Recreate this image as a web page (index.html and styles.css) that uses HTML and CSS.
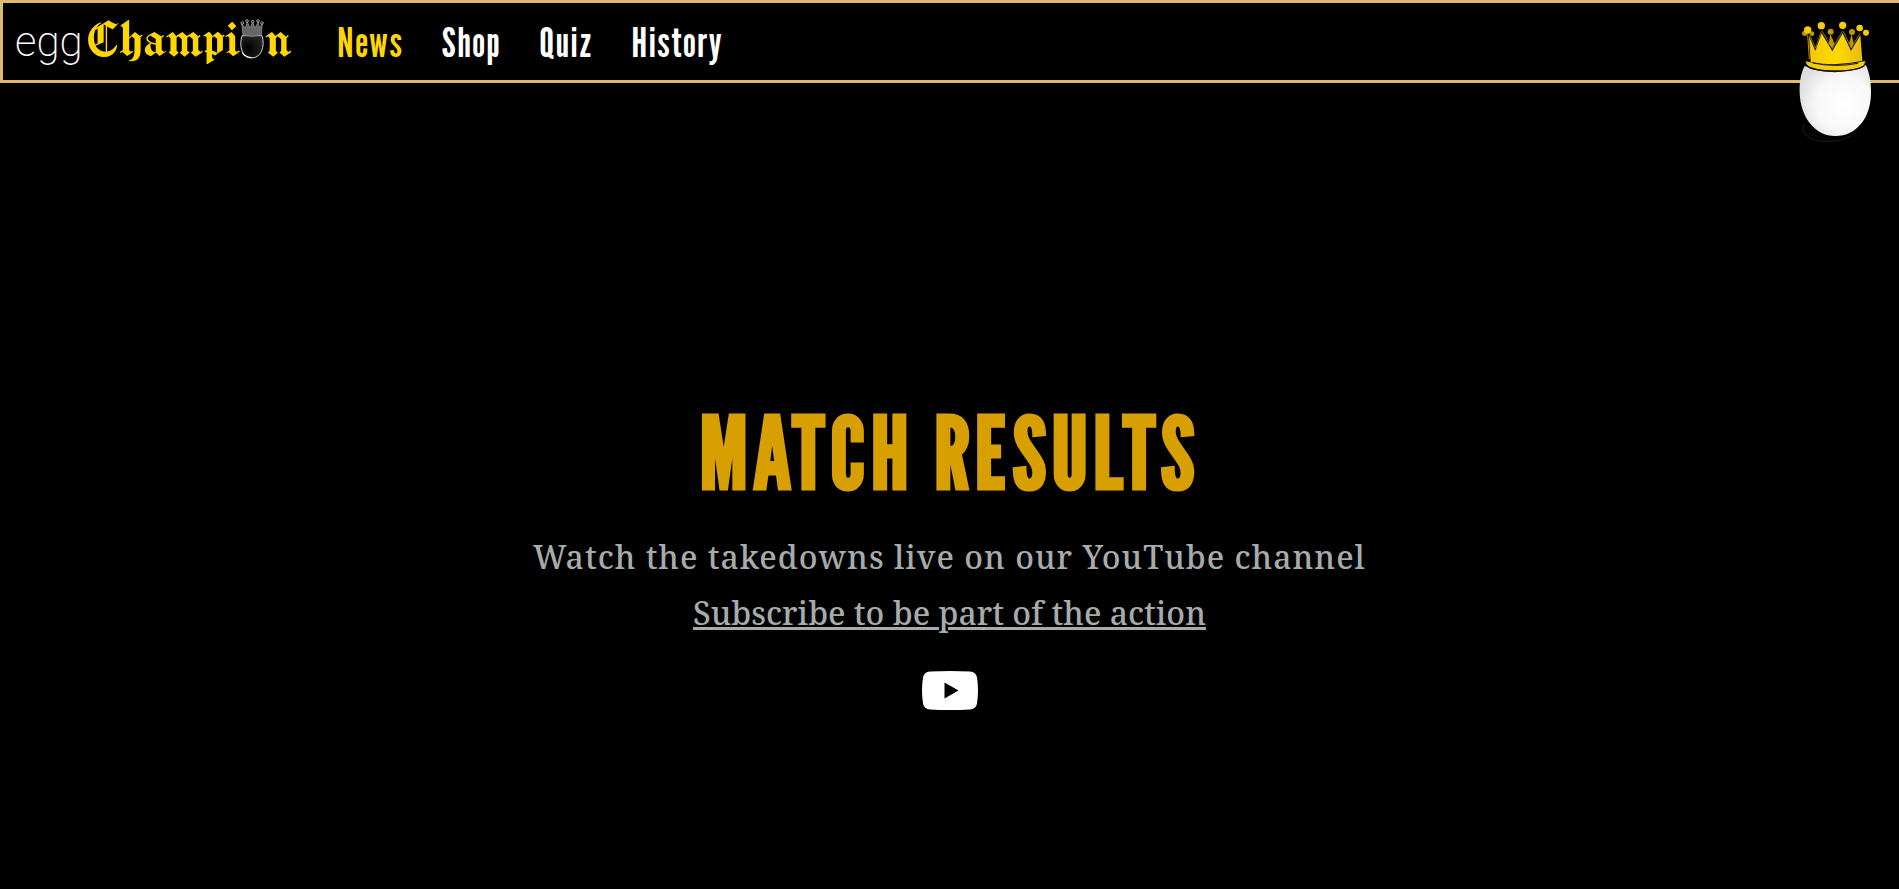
FILE: index.html
```html
<!DOCTYPE html>
<html lang="en">
<head>
<meta charset="utf-8">
<meta name="viewport" content="width=device-width, initial-scale=1">
<title>eggChampion</title>
<link rel="stylesheet" href="styles.css">
</head>
<body>
<header class="site-header">
  <a class="logo" href="#" aria-label="eggChampion">
    <span class="logo-egg">egg</span>
    <span class="logo-name">Champi<svg class="logo-o" viewBox="732 58 72 120" aria-hidden="true">
      <defs>
        <radialGradient id="dark" cx=".35" cy=".6" r=".7"><stop offset="0" stop-color="#000"/><stop offset="1" stop-color="#252525"/></radialGradient>
      </defs>
      <path d="M738 108C728 143 739 174 767 175c29 0 41-35 31-67z" fill="url(#dark)" stroke="#ccc" stroke-width="3"/>
      <path d="M737 155c9 14 19 15 33 19-16 3-31-4-33-19z" fill="#fff"/>
      <path d="M741 106l-4-34 11 13 6-19 8 19 8-18 7 18 10-19 3 19 9-13-3 34q-27 8-55 0z" fill="#666" stroke="#999" stroke-width="2"/>
      <g fill="#222" stroke="#ccc" stroke-width="2"><circle cx="739" cy="70" r="4"/><circle cx="753" cy="64" r="4"/><circle cx="770" cy="66" r="4"/><circle cx="786" cy="64" r="4"/><circle cx="798" cy="70" r="4"/></g>
    </svg>n</span>
  </a>
  <nav class="nav">
    <a class="nav-link active" href="#">News</a>
    <a class="nav-link" href="#">Shop</a>
    <a class="nav-link" href="#">Quiz</a>
    <a class="nav-link" href="#">History</a>
  </nav>
  <svg class="mascot" viewBox="78 54 240 384" aria-hidden="true">
    <defs>
      <radialGradient id="shell" cx=".62" cy=".55" r=".65"><stop offset="0" stop-color="#fff"/><stop offset=".6" stop-color="#f8f8f8"/><stop offset="1" stop-color="#dedede"/></radialGradient>
      <linearGradient id="gold"><stop offset="0" stop-color="#f2c50c"/><stop offset=".5" stop-color="#ffdb00"/><stop offset="1" stop-color="#e8bd12"/></linearGradient>
    </defs>
    <path d="M104 370C88 392 110 421 162 424c35 1 65-5 80-17" fill="#030303" stroke="#111" stroke-width="5"/>
    <path d="M104 198C92 220 88 249 89 278c2 73 46 130 107 130 65 0 107-57 107-130 0-31-4-58-15-82z" fill="url(#shell)"/>
    <path d="M103 184q4-8 13-10l-3-72 6-3 18 48 15-61h6l28 62 28-63h7l23 62 21-50h7l5 83q11 0 12 7-3 14-22 20-74 20-144 0-18-7-20-23z" fill="#090a08"/>
    <g fill="#bd9500"><path d="M176 131l5-28 13 28-7 13zM237 130l8-28 6 28-6 15z"/><circle cx="182" cy="95" r="9"/><circle cx="246" cy="96" r="9"/><circle cx="104" cy="100" r="8"/><circle cx="126" cy="101" r="7"/></g>
    <path d="M117 108l19 44 19-52 32 54 31-54 25 52 28-46 6 76q-79 19-155 4z" fill="url(#gold)"/>
    <path d="M154 94l-17 50-18-38M157 94l30 52 30-52M220 94l23 50 27-44" fill="none" stroke="#c79d00" stroke-width="2"/>
    <path d="M113 104l5 73" fill="none" stroke="#bd9500" stroke-width="3"/>
    <path d="M107 184q80 22 178-1 1 14-18 22-75 18-143-2-14-4-17-19z" fill="#f6cc06"/>
    <path d="M128 189q68 14 136 1" fill="none" stroke="#151400" stroke-width="3"/>
    <path d="M105 196q32 17 83 17 65 1 95-15" fill="none" stroke="#11100b" stroke-width="4"/>
    <g fill="#f5cd09"><circle cx="113" cy="90" r="11"/><circle cx="154" cy="77" r="11"/><circle cx="218" cy="76" r="11"/><circle cx="269" cy="84" r="10"/><circle cx="288" cy="98" r="9"/></g>
  </svg>
</header>
<main class="hero">
  <h1 class="title">MATCH RESULTS</h1>
  <p class="lead">Watch the takedowns live on our YouTube channel</p>
  <a class="subscribe" href="#">Subscribe to be part of the action</a>
  <a class="youtube" href="#" aria-label="YouTube">
    <svg class="youtube-icon" viewBox="0 0 56 39" aria-hidden="true"><path fill="#fff" fill-rule="evenodd" d="M8 .5Q28-.5 48 .5q6 .5 7 6 2 13 0 26-1 5.500-7 6Q28 39.500 8 38.500q-6-.5-7-6-2-13 0-26 1-5.500 7-6zM22.500 11.500v16l14-8z"/></svg>
  </a>
</main>
</body>
</html>
```
FILE: styles.css
```css
* { box-sizing: border-box; }
body {
  margin: 0;
  min-height: 100vh;
  background: #000;
  color: #fff;
  font-family: "League Gothic", Roboto, sans-serif;
}
a { color: inherit; text-decoration: none; }
.site-header {
  position: relative;
  display: flex;
  align-items: center;
  gap: 46px;
  height: 83px;
  padding: 0 12px;
  border: 3px solid #dfb974;
  border-right: 0;
}
.logo {
  display: flex;
  align-items: baseline;
  gap: 1px;
  padding-bottom: 2px;
  line-height: 60px;
}
.logo-egg { font-family: Roboto, sans-serif; font-weight: 200; font-size: 42px; }
.logo-name {
  color: #ffd700;
  font-family: "Manufacturing Consent", "Liberation Serif", serif;
  font-weight: 400;
  font-size: 56px;
}
.logo-o { width: 24px; height: 40px; margin: 0 1px; vertical-align: -3px; }
.nav { display: flex; gap: 38px; }
.nav-link { font-size: 41px; font-weight: 400; line-height: 48px; letter-spacing: 2px; }
.nav-link.active { color: #ffd700; }
.mascot {
  position: absolute;
  top: 15px;
  right: 23px;
  width: 80px;
  height: 128px;
}
.hero {
  display: flex;
  flex-direction: column;
  align-items: center;
  padding: 320px 24px 48px;
  text-align: center;
}
.title {
  margin: 0;
  color: #d7a000;
  font-size: 100px;
  font-weight: 700;
  line-height: 98px;
  letter-spacing: 5px;
}
.lead, .subscribe {
  margin: 0;
  color: #a6abab;
  font-family: "Noto Serif", "DejaVu Serif", serif;
  font-size: 32px;
  font-weight: 500;
  line-height: 56px;
}
.lead { margin-top: 28px; letter-spacing: 1px; }
.subscribe {
  text-decoration: underline;
  text-decoration-thickness: 3px;
}
.youtube { margin-top: 30px; }
.youtube-icon { display: block; width: 56px; height: 39px; }
```
